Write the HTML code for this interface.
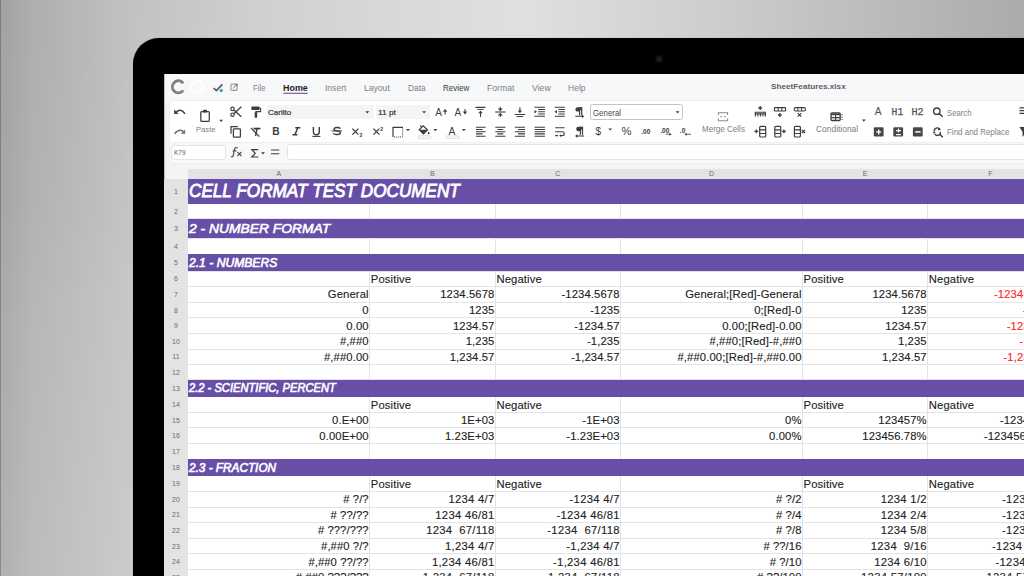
<!DOCTYPE html>
<html><head><meta charset="utf-8"><style>
html,body{margin:0;padding:0;width:1024px;height:576px;overflow:hidden;position:relative;font-family:'Liberation Sans', sans-serif}
#bg{position:absolute;left:0;top:0;width:1024px;height:576px;
 background:linear-gradient(90deg, #a8a8a8 0px, #b5b5b5 35px, #c6c6c6 133px, #d3d3d3 300px, #e0e0e0 525px, #cdcdcd 720px, #ababab 1024px)}
.hl{position:absolute;left:188px;width:836px;height:1px;background:#e4e4e4}
.vl{position:absolute;top:178.7px;width:1px;height:400px;background:#e4e4e4}
.pb{position:absolute;left:188px;width:836px;background:#674ea7}
.rn{position:absolute;left:164px;width:24px;text-align:center;font-size:7px;line-height:10px;color:#6b6b6b}
.cn{position:absolute;width:20px;text-align:center;font-size:7px;line-height:10px;color:#6b6b6b}
.t{position:absolute;white-space:pre;line-height:0;transform-origin:0 0}
.c{-webkit-text-stroke:0.12px currentColor}
.hs1{-webkit-text-stroke:0.9px #fff}
.hs2{-webkit-text-stroke:0.6px #fff}
.sb{font-weight:normal !important;-webkit-text-stroke:0.2px currentColor}
</style></head><body>
<div id="bg"></div>
<div style="position:absolute;left:0;top:0;width:1024px;height:576px;background:radial-gradient(ellipse 260px 330px at 0px 0px, rgba(0,0,0,0.04), rgba(0,0,0,0))"></div>
<div style="position:absolute;left:0;top:0;width:134px;height:576px;background:linear-gradient(180deg, rgba(255,255,255,0) 200px, rgba(255,255,255,0.1) 576px)"></div>
<div style="position:absolute;left:0;top:0;width:1px;height:576px;background:rgba(0,0,0,0.22)"></div>
<div style="position:absolute;left:133px;top:38px;width:1000px;height:600px;background:#000;border-radius:26px;box-shadow:0 0 1px rgba(0,0,0,0.35)"></div>
<div style="position:absolute;left:654.9px;top:54.6px;width:8px;height:8px;border-radius:50%;background:radial-gradient(circle, #1d1d1d 0, #161616 40%, #000 100%)"></div>
<div style="position:absolute;left:645px;top:56.4px;width:2.4px;height:2.4px;border-radius:50%;background:#070707"></div>
<div style="position:absolute;left:164px;top:74px;width:870px;height:510px;background:#f3f4f6"></div>
<div style="position:absolute;left:164px;top:74px;width:870px;height:26.5px;background:#f7f8fa"></div>
<div style="position:absolute;left:169.4px;top:99.8px;width:900px;height:64px;background:#f8f9fa;border:1px solid #eceef0;border-radius:5px;box-sizing:border-box"></div>
<div style="position:absolute;left:170.4px;top:100.8px;width:900px;height:41.2px;background:#fff;border-radius:4px 0 0 0"></div>
<div style="position:absolute;left:164px;top:74px;width:1px;height:510px;background:#b9b9b9"></div>
<div style="position:absolute;left:170.6px;top:142px;width:900px;height:2px;background:linear-gradient(#eceef0,#f8f9fa)"></div>
<div style="position:absolute;left:171.4px;top:144.5px;width:55px;height:15.7px;background:#fff;border:1px solid #e2e2e2;border-radius:3px;box-sizing:border-box"></div>
<div style="position:absolute;left:287px;top:144.4px;width:800px;height:16px;background:#fff;border:1px solid #e2e2e2;border-radius:3px;box-sizing:border-box"></div>
<div style="position:absolute;left:267.1px;top:104.8px;width:106.5px;height:14.5px;background:#f4f4f4;border-radius:2px"></div>
<div style="position:absolute;left:375.7px;top:104.8px;width:54.5px;height:14.5px;background:#f4f4f4;border-radius:2px"></div>
<div style="position:absolute;left:590px;top:104.3px;width:93px;height:15.4px;background:#fff;border:1px solid #c4c4c4;border-radius:2.5px;box-sizing:border-box"></div>
<div style="position:absolute;left:188px;top:178.7px;width:836px;height:400px;background:#fff"></div><div class="hl" style="top:178.20px"></div><div class="hl" style="top:203.10px"></div><div class="hl" style="top:218.30px"></div><div class="hl" style="top:237.90px"></div><div class="hl" style="top:253.50px"></div><div class="hl" style="top:270.60px"></div><div class="hl" style="top:286.00px"></div><div class="hl" style="top:301.70px"></div><div class="hl" style="top:317.30px"></div><div class="hl" style="top:332.90px"></div><div class="hl" style="top:348.50px"></div><div class="hl" style="top:364.10px"></div><div class="hl" style="top:379.30px"></div><div class="hl" style="top:396.20px"></div><div class="hl" style="top:411.80px"></div><div class="hl" style="top:427.40px"></div><div class="hl" style="top:443.00px"></div><div class="hl" style="top:458.60px"></div><div class="hl" style="top:475.20px"></div><div class="hl" style="top:490.90px"></div><div class="hl" style="top:506.50px"></div><div class="hl" style="top:522.10px"></div><div class="hl" style="top:537.70px"></div><div class="hl" style="top:553.30px"></div><div class="hl" style="top:568.90px"></div><div class="hl" style="top:584.50px"></div><div class="vl" style="left:369.10px"></div><div class="vl" style="left:494.80px"></div><div class="vl" style="left:620.00px"></div><div class="vl" style="left:801.90px"></div><div class="vl" style="left:927.10px"></div><div class="vl" style="left:1052.50px"></div><div class="pb" style="top:178.70px;height:24.90px"></div><div class="pb" style="top:218.80px;height:19.60px"></div><div class="pb" style="top:254.00px;height:17.10px"></div><div class="pb" style="top:379.80px;height:16.90px"></div><div class="pb" style="top:459.10px;height:16.60px"></div>
<div style="position:absolute;left:188px;top:168.8px;width:836px;height:9.9px;background:#e3e3e3"></div><div class="cn" style="left:268.80px;top:169px">A</div><div class="cn" style="left:422.45px;top:169px">B</div><div class="cn" style="left:547.90px;top:169px">C</div><div class="cn" style="left:701.45px;top:169px">D</div><div class="cn" style="left:855.00px;top:169px">E</div><div class="cn" style="left:980.30px;top:169px">F</div>
<div style="position:absolute;left:164px;top:178.7px;width:23.5px;height:400px;background:#e3e3e3"></div><div class="rn" style="top:186.65px">1</div><div class="rn" style="top:206.70px">2</div><div class="rn" style="top:224.10px">3</div><div class="rn" style="top:241.70px">4</div><div class="rn" style="top:258.05px">5</div><div class="rn" style="top:274.30px">6</div><div class="rn" style="top:289.85px">7</div><div class="rn" style="top:305.50px">8</div><div class="rn" style="top:321.10px">9</div><div class="rn" style="top:336.70px">10</div><div class="rn" style="top:352.30px">11</div><div class="rn" style="top:367.70px">12</div><div class="rn" style="top:383.75px">13</div><div class="rn" style="top:400.00px">14</div><div class="rn" style="top:415.60px">15</div><div class="rn" style="top:431.20px">16</div><div class="rn" style="top:446.80px">17</div><div class="rn" style="top:462.90px">18</div><div class="rn" style="top:479.05px">19</div><div class="rn" style="top:494.70px">20</div><div class="rn" style="top:510.30px">21</div><div class="rn" style="top:525.90px">22</div><div class="rn" style="top:541.50px">23</div><div class="rn" style="top:557.10px">24</div><div class="rn" style="top:572.70px">25</div>
<div class="t" style="top:87.67px;font-size:9.9px;color:#808080;left:252.60px;transform:scaleX(0.7851)">File</div><div class="t" style="top:87.67px;font-size:9.9px;color:#1d1d1d;font-weight:bold;left:283.00px;transform:scaleX(0.9041)">Home</div><div class="t" style="top:87.67px;font-size:9.9px;color:#808080;left:325.20px;transform:scaleX(0.8651)">Insert</div><div class="t" style="top:87.67px;font-size:9.9px;color:#808080;left:364.30px;transform:scaleX(0.8691)">Layout</div><div class="t" style="top:87.67px;font-size:9.9px;color:#808080;left:407.70px;transform:scaleX(0.8463)">Data</div><div class="t" style="top:87.67px;font-size:9.9px;color:#3a3a3a;left:443.40px;transform:scaleX(0.8127)">Review</div><div class="t" style="top:87.67px;font-size:9.9px;color:#808080;left:487.30px;transform:scaleX(0.8753)">Format</div><div class="t" style="top:87.67px;font-size:9.9px;color:#808080;left:532.20px;transform:scaleX(0.8799)">View</div><div class="t" style="top:87.67px;font-size:9.9px;color:#808080;left:568.40px;transform:scaleX(0.8650)">Help</div><div class="t" style="top:87.29px;font-size:8.1px;color:#5f5f5f;font-weight:bold;left:770.50px;transform:scaleX(1.0130)">SheetFeatures.xlsx</div><div class="t sb" style="top:112.97px;font-size:7.6px;color:#333;font-weight:600;left:268.40px;transform:scaleX(1.0626)">Carlito</div><div class="t sb" style="top:112.97px;font-size:7.6px;color:#333;font-weight:600;left:377.90px;transform:scaleX(1.0931)">11 pt</div><div class="t" style="top:112.52px;font-size:8.6px;color:#4a4a4a;left:593.30px;transform:scaleX(0.9160)">General</div><div class="t" style="top:129.57px;font-size:7.6px;color:#7c7c7c;left:195.90px;transform:scaleX(1.0033)">Paste</div><div class="t" style="top:129.66px;font-size:8.2px;color:#7c7c7c;left:702.30px;transform:scaleX(0.9825)">Merge Cells</div><div class="t" style="top:129.66px;font-size:8.2px;color:#7c7c7c;left:815.60px;transform:scaleX(1.0291)">Conditional</div><div class="t" style="top:112.82px;font-size:8.6px;color:#808080;left:947.20px;transform:scaleX(0.8995)">Search</div><div class="t" style="top:132.42px;font-size:8.6px;color:#808080;left:947.20px;transform:scaleX(0.9264)">Find and Replace</div><div class="t" style="top:152.75px;font-size:6.5px;color:#5a5a5a;left:174.00px;transform:scaleX(1.0006)">K79</div><div class="t hs1" style="top:191.12px;font-size:19.0px;color:#fff;font-style:italic;left:188.60px;transform:scaleX(0.9023)">CELL FORMAT TEST DOCUMENT</div><div class="t hs2" style="top:228.89px;font-size:13.6px;color:#fff;font-style:italic;left:189.00px;transform:scaleX(1.0182)">2 - NUMBER FORMAT</div><div class="t hs2" style="top:262.98px;font-size:11.9px;color:#fff;font-style:italic;left:189.00px;transform:scaleX(1.0200)">2.1 - NUMBERS</div><div class="t hs2" style="top:388.44px;font-size:12.0px;color:#fff;font-style:italic;left:189.00px;transform:scaleX(0.9290)">2.2 - SCIENTIFIC, PERCENT</div><div class="t hs2" style="top:467.84px;font-size:12.0px;color:#fff;font-style:italic;left:189.00px;transform:scaleX(0.9817)">2.3 - FRACTION</div><div class="t c" style="top:278.70px;font-size:11.25px;color:#222;letter-spacing:0.12px;left:370.80px">Positive</div><div class="t c" style="top:278.70px;font-size:11.25px;color:#222;letter-spacing:0.12px;left:496.50px">Negative</div><div class="t c" style="top:278.70px;font-size:11.25px;color:#222;letter-spacing:0.12px;left:803.60px">Positive</div><div class="t c" style="top:278.70px;font-size:11.25px;color:#222;letter-spacing:0.12px;left:928.80px">Negative</div><div class="t c" style="top:294.40px;font-size:11.25px;color:#222;letter-spacing:0.12px;right:655.28px">General</div><div class="t c" style="top:294.40px;font-size:11.25px;color:#222;letter-spacing:0.12px;right:529.58px">1234.5678</div><div class="t c" style="top:294.40px;font-size:11.25px;color:#222;letter-spacing:0.12px;right:404.38px">-1234.5678</div><div class="t c" style="top:294.40px;font-size:11.25px;color:#222;letter-spacing:0.12px;right:222.48px">General;[Red]-General</div><div class="t c" style="top:294.40px;font-size:11.25px;color:#222;letter-spacing:0.12px;right:97.28px">1234.5678</div><div class="t c" style="top:294.40px;font-size:11.25px;color:#f22;letter-spacing:0.12px;right:-28.12px">-1234.5678</div><div class="t c" style="top:310.00px;font-size:11.25px;color:#222;letter-spacing:0.12px;right:655.28px">0</div><div class="t c" style="top:310.00px;font-size:11.25px;color:#222;letter-spacing:0.12px;right:529.58px">1235</div><div class="t c" style="top:310.00px;font-size:11.25px;color:#222;letter-spacing:0.12px;right:404.38px">-1235</div><div class="t c" style="top:310.00px;font-size:11.25px;color:#222;letter-spacing:0.12px;right:222.48px">0;[Red]-0</div><div class="t c" style="top:310.00px;font-size:11.25px;color:#222;letter-spacing:0.12px;right:97.28px">1235</div><div class="t c" style="top:310.00px;font-size:11.25px;color:#f22;letter-spacing:0.12px;right:-28.12px">-1235</div><div class="t c" style="top:325.60px;font-size:11.25px;color:#222;letter-spacing:0.12px;right:655.28px">0.00</div><div class="t c" style="top:325.60px;font-size:11.25px;color:#222;letter-spacing:0.12px;right:529.58px">1234.57</div><div class="t c" style="top:325.60px;font-size:11.25px;color:#222;letter-spacing:0.12px;right:404.38px">-1234.57</div><div class="t c" style="top:325.60px;font-size:11.25px;color:#222;letter-spacing:0.12px;right:222.48px">0.00;[Red]-0.00</div><div class="t c" style="top:325.60px;font-size:11.25px;color:#222;letter-spacing:0.12px;right:97.28px">1234.57</div><div class="t c" style="top:325.60px;font-size:11.25px;color:#f22;letter-spacing:0.12px;right:-28.12px">-1234.57</div><div class="t c" style="top:341.20px;font-size:11.25px;color:#222;letter-spacing:0.12px;right:655.28px">#,##0</div><div class="t c" style="top:341.20px;font-size:11.25px;color:#222;letter-spacing:0.12px;right:529.58px">1,235</div><div class="t c" style="top:341.20px;font-size:11.25px;color:#222;letter-spacing:0.12px;right:404.38px">-1,235</div><div class="t c" style="top:341.20px;font-size:11.25px;color:#222;letter-spacing:0.12px;right:222.48px">#,##0;[Red]-#,##0</div><div class="t c" style="top:341.20px;font-size:11.25px;color:#222;letter-spacing:0.12px;right:97.28px">1,235</div><div class="t c" style="top:341.20px;font-size:11.25px;color:#f22;letter-spacing:0.12px;right:-28.12px">-1,235</div><div class="t c" style="top:356.80px;font-size:11.25px;color:#222;letter-spacing:0.12px;right:655.28px">#,##0.00</div><div class="t c" style="top:356.80px;font-size:11.25px;color:#222;letter-spacing:0.12px;right:529.58px">1,234.57</div><div class="t c" style="top:356.80px;font-size:11.25px;color:#222;letter-spacing:0.12px;right:404.38px">-1,234.57</div><div class="t c" style="top:356.80px;font-size:11.25px;color:#222;letter-spacing:0.12px;right:222.48px">#,##0.00;[Red]-#,##0.00</div><div class="t c" style="top:356.80px;font-size:11.25px;color:#222;letter-spacing:0.12px;right:97.28px">1,234.57</div><div class="t c" style="top:356.80px;font-size:11.25px;color:#f22;letter-spacing:0.12px;right:-28.12px">-1,234.57</div><div class="t c" style="top:404.50px;font-size:11.25px;color:#222;letter-spacing:0.12px;left:370.80px">Positive</div><div class="t c" style="top:404.50px;font-size:11.25px;color:#222;letter-spacing:0.12px;left:496.50px">Negative</div><div class="t c" style="top:404.50px;font-size:11.25px;color:#222;letter-spacing:0.12px;left:803.60px">Positive</div><div class="t c" style="top:404.50px;font-size:11.25px;color:#222;letter-spacing:0.12px;left:928.80px">Negative</div><div class="t c" style="top:420.10px;font-size:11.25px;color:#222;letter-spacing:0.12px;right:655.28px">0.E+00</div><div class="t c" style="top:420.10px;font-size:11.25px;color:#222;letter-spacing:0.12px;right:529.58px">1E+03</div><div class="t c" style="top:420.10px;font-size:11.25px;color:#222;letter-spacing:0.12px;right:404.38px">-1E+03</div><div class="t c" style="top:420.10px;font-size:11.25px;color:#222;letter-spacing:0.12px;right:222.48px">0%</div><div class="t c" style="top:420.10px;font-size:11.25px;color:#222;letter-spacing:0.12px;right:97.28px">123457%</div><div class="t c" style="top:420.10px;font-size:11.25px;color:#222;letter-spacing:0.12px;right:-28.12px">-123457%</div><div class="t c" style="top:435.70px;font-size:11.25px;color:#222;letter-spacing:0.12px;right:655.28px">0.00E+00</div><div class="t c" style="top:435.70px;font-size:11.25px;color:#222;letter-spacing:0.12px;right:529.58px">1.23E+03</div><div class="t c" style="top:435.70px;font-size:11.25px;color:#222;letter-spacing:0.12px;right:404.38px">-1.23E+03</div><div class="t c" style="top:435.70px;font-size:11.25px;color:#222;letter-spacing:0.12px;right:222.48px">0.00%</div><div class="t c" style="top:435.70px;font-size:11.25px;color:#222;letter-spacing:0.12px;right:97.28px">123456.78%</div><div class="t c" style="top:435.70px;font-size:11.25px;color:#222;letter-spacing:0.12px;right:-28.12px">-123456.78%</div><div class="t c" style="top:483.60px;font-size:11.25px;color:#222;letter-spacing:0.12px;left:370.80px">Positive</div><div class="t c" style="top:483.60px;font-size:11.25px;color:#222;letter-spacing:0.12px;left:496.50px">Negative</div><div class="t c" style="top:483.60px;font-size:11.25px;color:#222;letter-spacing:0.12px;left:803.60px">Positive</div><div class="t c" style="top:483.60px;font-size:11.25px;color:#222;letter-spacing:0.12px;left:928.80px">Negative</div><div class="t c" style="top:499.20px;font-size:11.25px;color:#222;letter-spacing:0.08px;right:655.32px"># ?/?</div><div class="t c" style="top:499.20px;font-size:11.25px;color:#222;letter-spacing:0.3px;right:529.40px">1234 4/7</div><div class="t c" style="top:499.20px;font-size:11.25px;color:#222;letter-spacing:0.3px;right:404.20px">-1234 4/7</div><div class="t c" style="top:499.20px;font-size:11.25px;color:#222;letter-spacing:0.08px;right:222.52px"># ?/2</div><div class="t c" style="top:499.20px;font-size:11.25px;color:#222;letter-spacing:0.3px;right:97.10px">1234 1/2</div><div class="t c" style="top:499.20px;font-size:11.25px;color:#222;letter-spacing:0.3px;right:-28.30px">-1234 1/2</div><div class="t c" style="top:514.80px;font-size:11.25px;color:#222;letter-spacing:0.08px;right:655.32px"># ??/??</div><div class="t c" style="top:514.80px;font-size:11.25px;color:#222;letter-spacing:0.3px;right:529.40px">1234 46/81</div><div class="t c" style="top:514.80px;font-size:11.25px;color:#222;letter-spacing:0.3px;right:404.20px">-1234 46/81</div><div class="t c" style="top:514.80px;font-size:11.25px;color:#222;letter-spacing:0.08px;right:222.52px"># ?/4</div><div class="t c" style="top:514.80px;font-size:11.25px;color:#222;letter-spacing:0.3px;right:97.10px">1234 2/4</div><div class="t c" style="top:514.80px;font-size:11.25px;color:#222;letter-spacing:0.3px;right:-28.30px">-1234 2/4</div><div class="t c" style="top:530.40px;font-size:11.25px;color:#222;letter-spacing:0.08px;right:655.32px"># ???/???</div><div class="t c" style="top:530.40px;font-size:11.25px;color:#222;letter-spacing:0.3px;right:529.40px">1234  67/118</div><div class="t c" style="top:530.40px;font-size:11.25px;color:#222;letter-spacing:0.3px;right:404.20px">-1234  67/118</div><div class="t c" style="top:530.40px;font-size:11.25px;color:#222;letter-spacing:0.08px;right:222.52px"># ?/8</div><div class="t c" style="top:530.40px;font-size:11.25px;color:#222;letter-spacing:0.3px;right:97.10px">1234 5/8</div><div class="t c" style="top:530.40px;font-size:11.25px;color:#222;letter-spacing:0.3px;right:-28.30px">-1234 5/8</div><div class="t c" style="top:546.00px;font-size:11.25px;color:#222;letter-spacing:0.08px;right:655.32px">#,##0 ?/?</div><div class="t c" style="top:546.00px;font-size:11.25px;color:#222;letter-spacing:0.3px;right:529.40px">1,234 4/7</div><div class="t c" style="top:546.00px;font-size:11.25px;color:#222;letter-spacing:0.3px;right:404.20px">-1,234 4/7</div><div class="t c" style="top:546.00px;font-size:11.25px;color:#222;letter-spacing:0.08px;right:222.52px"># ??/16</div><div class="t c" style="top:546.00px;font-size:11.25px;color:#222;letter-spacing:0.3px;right:97.10px">1234  9/16</div><div class="t c" style="top:546.00px;font-size:11.25px;color:#222;letter-spacing:0.3px;right:-28.30px">-1234  9/16</div><div class="t c" style="top:561.60px;font-size:11.25px;color:#222;letter-spacing:0.08px;right:655.32px">#,##0 ??/??</div><div class="t c" style="top:561.60px;font-size:11.25px;color:#222;letter-spacing:0.3px;right:529.40px">1,234 46/81</div><div class="t c" style="top:561.60px;font-size:11.25px;color:#222;letter-spacing:0.3px;right:404.20px">-1,234 46/81</div><div class="t c" style="top:561.60px;font-size:11.25px;color:#222;letter-spacing:0.08px;right:222.52px"># ?/10</div><div class="t c" style="top:561.60px;font-size:11.25px;color:#222;letter-spacing:0.3px;right:97.10px">1234 6/10</div><div class="t c" style="top:561.60px;font-size:11.25px;color:#222;letter-spacing:0.3px;right:-28.30px">-1234 6/10</div><div class="t c" style="top:577.20px;font-size:11.25px;color:#222;letter-spacing:0.08px;right:655.32px">#,##0 ???/???</div><div class="t c" style="top:577.20px;font-size:11.25px;color:#222;letter-spacing:0.3px;right:529.40px">1,234  67/118</div><div class="t c" style="top:577.20px;font-size:11.25px;color:#222;letter-spacing:0.3px;right:404.20px">-1,234  67/118</div><div class="t c" style="top:577.20px;font-size:11.25px;color:#222;letter-spacing:0.08px;right:222.52px"># ??/100</div><div class="t c" style="top:577.20px;font-size:11.25px;color:#222;letter-spacing:0.3px;right:97.10px">1234 57/100</div><div class="t c" style="top:577.20px;font-size:11.25px;color:#222;letter-spacing:0.3px;right:-28.30px">-1234 57/100</div>
<svg style="position:absolute;left:0;top:0" width="1024" height="576" viewBox="0 0 1024 576"><path d="M182.41 82.34 A6.0 6.0 0 1 0 182.41 91.26" fill="none" stroke="#808080" stroke-width="2.9" stroke-linecap="round"/><circle cx="197" cy="87" r="6" fill="none" stroke="#ffffff" stroke-width="2.2"/><path d="M213.6 88 L216.3 90.6 L222.4 84.4" fill="none" stroke="#555" stroke-width="1.6"/><circle cx="221.2" cy="90.5" r="1.7" fill="#3d9ddc"/><rect x="230.9" y="84.2" width="6.2" height="6.2" rx="1.2" fill="none" stroke="#999" stroke-width="1.2"/><path d="M233.2 88.2 L236.4 85" stroke="#666" stroke-width="1"/><circle cx="236.7" cy="84.7" r="0.9" fill="#555"/><rect x="283.3" y="92.7" width="24.4" height="1.3" fill="#8d62b8"/><path d="M176 112.4 Q180.5 107.6 185 113.8" fill="none" stroke="#3d3d3d" stroke-width="1.5"/><path d="M174.2 109.6 V114 H178.6 Z" fill="#3d3d3d"/><path d="M174.6 133.8 Q179 128.4 183.4 131.4" fill="none" stroke="#6e6e6e" stroke-width="1.5"/><path d="M185.2 129.4 V133.8 H180.8 Z" fill="#6e6e6e"/><rect x="200.8" y="111.6" width="8.5" height="9.8" rx="0.9" fill="none" stroke="#3d3d3d" stroke-width="1.25"/><rect x="203" y="109.8" width="4" height="2.6" rx="0.5" fill="#3d3d3d"/><path d="M219.25 119.75H223.05L221.15 121.95Z" fill="#3d3d3d"/><circle cx="232.5" cy="108.9" r="1.7" fill="none" stroke="#3d3d3d" stroke-width="1.2"/><circle cx="232.5" cy="114.7" r="1.7" fill="none" stroke="#3d3d3d" stroke-width="1.2"/><path d="M233.9 109.9 L241.3 116.8 M233.9 113.7 L241.3 106.8" fill="none" stroke="#3d3d3d" stroke-width="1.3"/><rect x="251.4" y="106.6" width="8.2" height="3.4" rx="0.8" fill="#3d3d3d"/><path d="M259.2 108.3 H260.6 V111.6 H255.9 V117.4" fill="none" stroke="#3d3d3d" stroke-width="1.1"/><rect x="254.7" y="112.2" width="2.5" height="5.4" fill="#3d3d3d"/><path d="M365.35 111.35H369.15L367.25 113.55Z" fill="#3d3d3d"/><path d="M422.20 111.35H426.00L424.10 113.55Z" fill="#3d3d3d"/><text x="435.2" y="116" font-family="Liberation Sans" font-size="10" fill="#3d3d3d">A</text><path d="M445.1 114.6 V109.8" stroke="#3d3d3d" stroke-width="1.1"/><path d="M442.9 111.7 L445.1 109 L447.3 111.7Z" fill="#3d3d3d"/><text x="454.6" y="116" font-family="Liberation Sans" font-size="10" fill="#3d3d3d">A</text><path d="M465 109 V113.6" stroke="#3d3d3d" stroke-width="1.1"/><path d="M462.8 111.6 L465 114.4 L467.2 111.6Z" fill="#3d3d3d"/><path d="M475.5 107.4 H485.5" stroke="#3d3d3d" stroke-width="1.3"/><path d="M477.3 109.5 H483.7" stroke="#3d3d3d" stroke-width="0.9"/><path d="M480.5 117 V112" stroke="#3d3d3d" stroke-width="1.1"/><path d="M478.3 113.2 L480.5 110.6 L482.7 113.2Z" fill="#3d3d3d"/><path d="M495.2 112 H505.4" stroke="#3d3d3d" stroke-width="1.1"/><path d="M500.3 106.8 V109.5 M500.3 117 V114.4" stroke="#3d3d3d" stroke-width="1.1"/><path d="M497.8 108.6 L500.3 111.2 L502.8 108.6Z M497.8 115.4 L500.3 112.8 L502.8 115.4Z" fill="#3d3d3d"/><path d="M514.8 114.5 H525 M516.6 116.5 H523.2" stroke="#3d3d3d" stroke-width="1.1"/><path d="M519.9 107.3 V111.5" stroke="#3d3d3d" stroke-width="1.1"/><path d="M517.7 110.6 L519.9 113.2 L522.1 110.6Z" fill="#3d3d3d"/><path d="M534.3 107.3 H544.9 M538.2 109.5 H544.9 M538.2 111.7 H544.9 M538.2 113.9 H544.9 M534.3 116.3 H544.9" stroke="#3d3d3d" stroke-width="1.05"/><path d="M534.5 110 L537 111.8 L534.5 113.6Z" fill="#3d3d3d"/><path d="M554.6 107.3 H564.8 M558.4 109.5 H564.8 M558.4 111.7 H564.8 M558.4 113.9 H564.8 M554.6 116.3 H564.8" stroke="#3d3d3d" stroke-width="1.05"/><path d="M557 110 L554.5 111.8 L557 113.6Z" fill="#3d3d3d"/><path d="M582.6 107.2 H577.6 A2.2 2.2 0 0 0 577.6 111.6 H579.6 Z" fill="#3d3d3d"/><path d="M579.6 107.2 V115.2 M581.7 107.2 V115.2" stroke="#3d3d3d" stroke-width="1.2"/><path d="M575.3 116.3 H583" stroke="#3d3d3d" stroke-width="1.1"/><path d="M582 114.4 L584.2 116.3 L582 118.2Z" fill="#3d3d3d"/><path d="M675.70 111.30H679.50L677.60 113.50Z" fill="#3d3d3d"/><path d="M718.4 115 V112.8 H727.6 V115 M718.4 118.6 V120.8 H727.6 V118.6" fill="none" stroke="#8a8a8a" stroke-width="1.05"/><path d="M720.2 116.8 H722 M724 116.8 H725.8" stroke="#8a8a8a" stroke-width="1.05"/><path d="M758.3000000000001 108.0 H762.1 M760.2 106.1 V109.9" stroke="#3d3d3d" stroke-width="1.3"/><path d="M754.8 112.2 H765.8 M754.8 113.9 H765.8" stroke="#3d3d3d" stroke-width="1.1"/><path d="M755.4 112.2 V116.6 M758 113.9 V116.6 M760.5 113.9 V116.6 M763 113.9 V116.6 M765.4 112.2 V116.6" stroke="#3d3d3d" stroke-width="1.1"/><rect x="774.4" y="107.6" width="11.2" height="3.4" rx="0.6" fill="none" stroke="#3d3d3d" stroke-width="1.1"/><path d="M778.1 107.6 V111 M781.8 107.6 V111" stroke="#3d3d3d" stroke-width="1"/><path d="M777.9 115.0 H781.6999999999999 M779.8 113.1 V116.9" stroke="#3d3d3d" stroke-width="1.3"/><rect x="794.2" y="107.6" width="11.2" height="3.4" rx="1.2" fill="none" stroke="#3d3d3d" stroke-width="1.1"/><path d="M797.9 107.6 V111 M801.6 107.6 V111" stroke="#3d3d3d" stroke-width="1"/><path d="M797.8 113.2 L801.2 116.60000000000001 M801.2 113.2 L797.8 116.60000000000001" stroke="#3d3d3d" stroke-width="1.2"/><rect x="831" y="112.9" width="9.2" height="7.6" rx="1" fill="none" stroke="#3d3d3d" stroke-width="1.3"/><path d="M831 114.3 H840.2" stroke="#3d3d3d" stroke-width="1.8"/><path d="M831 117.6 H840.2 M835.6 115 V120.5" stroke="#3d3d3d" stroke-width="1.1"/><path d="M842.1 114 V115.2 M842.1 116.4 V117.6 M842.1 118.8 V120" stroke="#3d3d3d" stroke-width="1"/><path d="M861.90 119.60H865.70L863.80 121.80Z" fill="#3d3d3d"/><text x="874.8" y="115.3" font-family="Liberation Sans" font-size="10.2" fill="#4a4a4a">A</text><text x="891.6" y="115.4" font-family="Liberation Mono" font-size="10.4" fill="#505050" stroke="#505050" stroke-width="0.25" textLength="11.6" lengthAdjust="spacingAndGlyphs">H1</text><text x="911.4" y="115.4" font-family="Liberation Mono" font-size="10.4" fill="#505050" stroke="#505050" stroke-width="0.25" textLength="12.2" lengthAdjust="spacingAndGlyphs">H2</text><circle cx="936.8" cy="111.2" r="3.2" fill="none" stroke="#3d3d3d" stroke-width="1.35"/><path d="M939.2 113.6 L942.6 116.8" stroke="#3d3d3d" stroke-width="1.5"/><path d="M1019.5 107.8 H1024 M1019.5 110.6 H1024 M1019.5 113.4 H1024" stroke="#3d3d3d" stroke-width="1.2"/><path d="M231 133.8 V126.6 H237.8" fill="none" stroke="#3d3d3d" stroke-width="1.25"/><rect x="233.4" y="128.9" width="7" height="8.3" rx="0.6" fill="none" stroke="#3d3d3d" stroke-width="1.25"/><path d="M253.6 128.6 H260.4" stroke="#3d3d3d" stroke-width="1.8"/><path d="M257 128.6 L255.6 136" stroke="#3d3d3d" stroke-width="1.4"/><path d="M251 128 L259.4 136.6" stroke="#3d3d3d" stroke-width="1.2"/><text x="272.2" y="135.1" font-family="Liberation Sans" font-weight="bold" font-size="10.2" fill="#3d3d3d">B</text><path d="M295.3 127.8 H300.3 M292.4 134.7 H297.4 M297.8 127.8 L294.9 134.7" fill="none" stroke="#3d3d3d" stroke-width="1.5"/><path d="M313.4 127 V131.8 A2.9 2.9 0 0 0 319.3 131.8 V127" fill="none" stroke="#3d3d3d" stroke-width="1.4"/><path d="M312.4 136.4 H320.4" stroke="#3d3d3d" stroke-width="1.1"/><path d="M340.3 128.6 C339.4 127.1 334 126.9 334 129.3 C334 131.4 340.4 130.5 340.4 132.7 C340.4 135 334.4 134.9 333.3 133.3" fill="none" stroke="#3d3d3d" stroke-width="1.35"/><path d="M331.7 130.9 H341.9" stroke="#3d3d3d" stroke-width="1.1"/><path d="M352.4 128.6 L358.4 134.6 M358.4 128.6 L352.4 134.6" stroke="#3d3d3d" stroke-width="1.3"/><text x="359.4" y="137" font-family="Liberation Sans" font-weight="bold" font-size="5.2" fill="#3d3d3d">2</text><path d="M373.4 128.6 L379.4 134.6 M379.4 128.6 L373.4 134.6" stroke="#3d3d3d" stroke-width="1.3"/><text x="380.2" y="130.6" font-family="Liberation Sans" font-weight="bold" font-size="5.2" fill="#3d3d3d">2</text><path d="M393 137 V127.3 H403" fill="none" stroke="#3d3d3d" stroke-width="1.2"/><path d="M402.6 128.5 V137 H393.5" fill="none" stroke="#3d3d3d" stroke-width="1" stroke-dasharray="1 1"/><path d="M406.05 129.00H409.85L407.95 131.20Z" fill="#3d3d3d"/><path d="M419.2 129.8 L423.3 125.8 L427.5 130 L423.4 134 Z" fill="none" stroke="#3d3d3d" stroke-width="1.2"/><path d="M419.2 129.8 H427.5 L423.4 134 Z" fill="#3d3d3d"/><path d="M421.6 127.4 L420.3 125.2" stroke="#3d3d3d" stroke-width="1.1"/><path d="M428.7 131.4 L429.6 133 A0.95 0.95 0 1 1 427.8 133 Z" fill="#3d3d3d"/><rect x="417.6" y="135.9" width="13.2" height="2.4" rx="1.2" fill="none" stroke="#d2d2d2" stroke-width="0.8"/><path d="M433.50 129.00H437.30L435.40 131.20Z" fill="#3d3d3d"/><text x="448.4" y="134.9" font-family="Liberation Sans" font-size="10.4" fill="#3d3d3d">A</text><rect x="445.5" y="135.9" width="13.6" height="2.4" rx="1.2" fill="none" stroke="#d2d2d2" stroke-width="0.8"/><path d="M461.95 129.00H465.75L463.85 131.20Z" fill="#3d3d3d"/><path d="M476 127.3H485.6M476 129.5H482.6M476 131.7H485.6M476 133.9H482.6M476 136.3H485.6" stroke="#3d3d3d" stroke-width="1.1"/><path d="M495.3 127.3H505.4M497.4 129.5H503.3M495.3 131.7H505.4M497.4 133.9H503.3M495.3 136.3H505.4" stroke="#3d3d3d" stroke-width="1.1"/><path d="M514.8 127.3H525M518 129.5H525M514.8 131.7H525M518 133.9H525M514.8 136.3H525" stroke="#3d3d3d" stroke-width="1.1"/><path d="M534.6 127.3H544.9M534.6 129.5H544.9M534.6 131.7H544.9M534.6 133.9H544.9M534.6 136.3H544.9" stroke="#3d3d3d" stroke-width="1.1"/><path d="M555.2 127.8 H564.6 M555.2 135.6 H558" stroke="#3d3d3d" stroke-width="1.1"/><path d="M555.2 131.7 H562.3 A1.95 1.95 0 0 1 562.3 135.6 H560.6" fill="none" stroke="#3d3d3d" stroke-width="1.1"/><path d="M561 134.2 L559.2 135.6 L561 137Z" fill="#3d3d3d"/><path d="M583.4 126.8 H578.4 A2.2 2.2 0 0 0 578.4 131.2 H580.4 Z" fill="#3d3d3d"/><path d="M580.4 126.8 V134.8 M582.5 126.8 V134.8" stroke="#3d3d3d" stroke-width="1.2"/><path d="M576.5 136 H584.1" stroke="#3d3d3d" stroke-width="1.1"/><path d="M577.3 134.1 L575.1 136 L577.3 137.9Z" fill="#3d3d3d"/><text x="595.4" y="134.6" font-family="Liberation Sans" font-size="10" fill="#3d3d3d">$</text><path d="M608.30 128.40H612.10L610.20 130.60Z" fill="#3d3d3d"/><text x="621.4" y="135.4" font-family="Liberation Sans" font-size="11.2" fill="#3d3d3d">%</text><text x="641.2" y="134" font-family="Liberation Sans" font-weight="bold" font-size="6.6" fill="#3d3d3d">.00</text><text x="660.2" y="133.4" font-family="Liberation Sans" font-weight="bold" font-size="6.6" fill="#3d3d3d">.00</text><path d="M665.6 134.2 H670" stroke="#3d3d3d" stroke-width="0.8"/><path d="M669.4 132.7 L671.6 134.2 L669.4 135.7Z" fill="#3d3d3d"/><text x="679.8" y="133.4" font-family="Liberation Sans" font-weight="bold" font-size="6.6" fill="#3d3d3d">.0</text><path d="M686 134.2 H691" stroke="#3d3d3d" stroke-width="0.8"/><path d="M686.6 132.7 L684.4 134.2 L686.6 135.7Z" fill="#3d3d3d"/><path d="M754.4 131.3 H758.1999999999999 M756.3 129.4 V133.20000000000002" stroke="#3d3d3d" stroke-width="1.3"/><rect x="759.7" y="126.4" width="6" height="10.6" rx="1" fill="none" stroke="#3d3d3d" stroke-width="1.2"/><path d="M759.7 129.9 H765.7 M759.7 133.5 H765.7" stroke="#3d3d3d" stroke-width="1.1"/><rect x="774.8" y="126.4" width="6" height="10.6" rx="1" fill="none" stroke="#3d3d3d" stroke-width="1.2"/><path d="M774.8 129.9 H780.8 M774.8 133.5 H780.8" stroke="#3d3d3d" stroke-width="1.1"/><path d="M782.0 131.3 H785.8 M783.9 129.4 V133.20000000000002" stroke="#3d3d3d" stroke-width="1.3"/><rect x="794.4" y="126.4" width="6" height="10.6" rx="1" fill="none" stroke="#3d3d3d" stroke-width="1.2"/><path d="M794.4 129.9 H800.4 M794.4 133.5 H800.4" stroke="#3d3d3d" stroke-width="1.1"/><path d="M801.8 129.8 L805.0 133.0 M805.0 129.8 L801.8 133.0" stroke="#3d3d3d" stroke-width="1.2"/><rect x="873.8" y="127.3" width="9.8" height="9.2" rx="1.2" fill="#474747"/><rect x="893.3" y="127.3" width="9.8" height="9.2" rx="1.2" fill="#474747"/><rect x="912.9" y="127.3" width="9.8" height="9.2" rx="1.2" fill="#474747"/><path d="M876.2 131.9 H881.2 M878.7 129.4 V134.4" stroke="#fff" stroke-width="1.4"/><path d="M896 130.6 H901 M898.5 128.4 V132.6 M896 134.6 H901" stroke="#fff" stroke-width="1.2"/><path d="M915.3 131.9 H920.6" stroke="#fff" stroke-width="1.5"/><path d="M934.3 131.6 A3.1 3.1 0 0 1 939.9 129.3" fill="none" stroke="#3d3d3d" stroke-width="1.3"/><path d="M940.4 131.8 A3.1 3.1 0 0 1 934.8 134.1" fill="none" stroke="#3d3d3d" stroke-width="1.3"/><path d="M938.6 127.4 L941 129.9 L937.8 130.2Z" fill="#3d3d3d"/><path d="M933.5 131.4 L933.2 133.8 L936 133.1Z" fill="#3d3d3d"/><path d="M939.6 134.2 L942.8 137.2" stroke="#3d3d3d" stroke-width="1.5"/><path d="M1019.4 127 H1024 V135 L1022.5 137 V131.8 Z" fill="#3d3d3d"/><path d="M237.6 148.2 C236.6 147 235 147.4 234.6 149.2 L233.2 155.6 C232.8 157.2 231.6 157.2 231 156.4 M232.6 150.8 H236.4" fill="none" stroke="#505050" stroke-width="1.2"/><path d="M237.4 152 L241.4 156 M241.4 152 L237.4 156" stroke="#505050" stroke-width="1.1"/><path d="M258.2 149.6 H251.8 L255.2 153.3 L251.8 157 H258.4" fill="none" stroke="#3d3d3d" stroke-width="1.2"/><path d="M261.10 152.20H264.90L263.00 154.40Z" fill="#3d3d3d"/><path d="M271 149.9 H279.3 M271 153.7 H279.3" stroke="#3d3d3d" stroke-width="1.05"/></svg>
</body></html>
